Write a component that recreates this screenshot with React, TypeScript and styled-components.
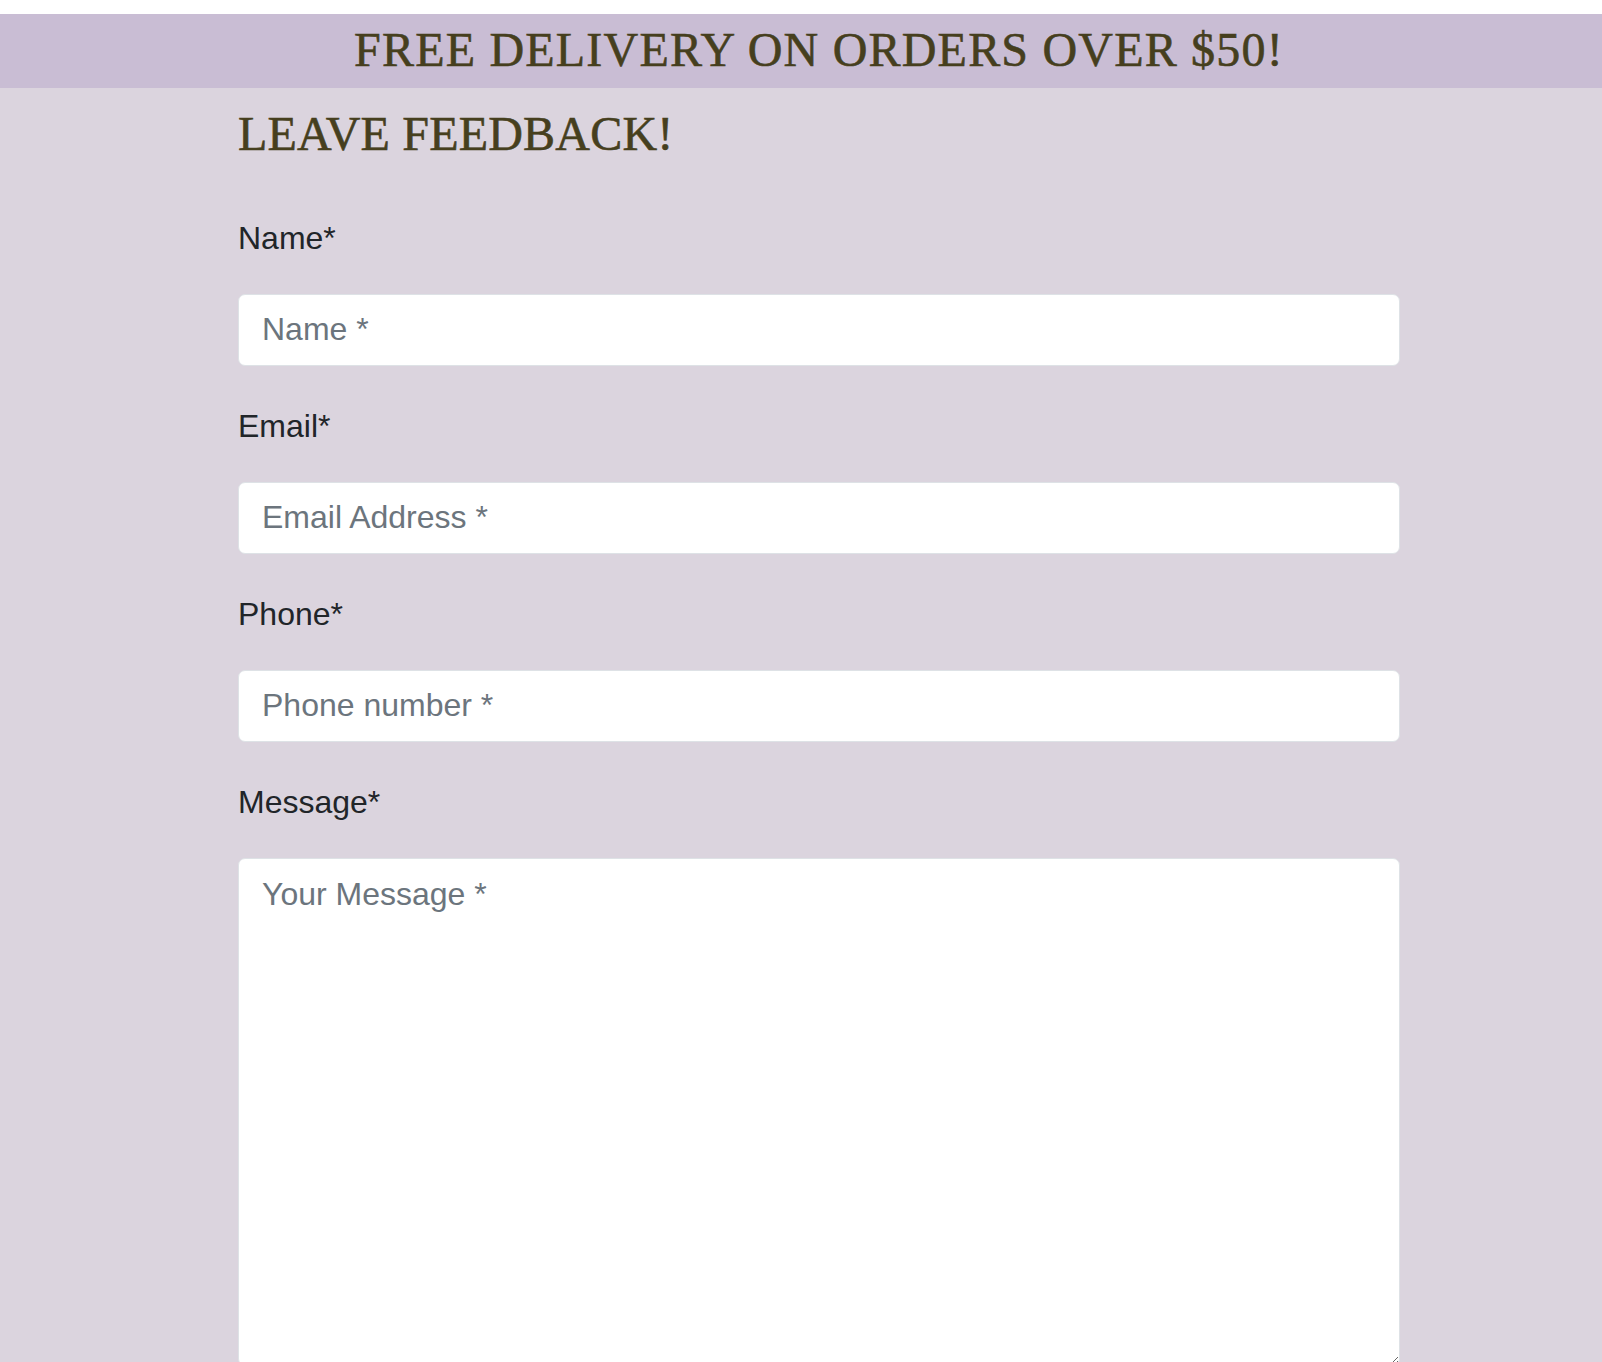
import styled, { createGlobalStyle } from 'styled-components';

const GlobalStyle = createGlobalStyle`
  html, body {
    margin: 0;
    padding: 0;
    background: #ffffff;
  }
  * {
    box-sizing: border-box;
  }
`;

const Page = styled.div`
  padding-top: 14px;
  background: #ffffff;
`;

const PromoBar = styled.div`
  background: #c9bdd4;
  height: 74px;
  padding: 0 0 2px 36px;
  text-align: center;
  font-family: 'Liberation Serif', 'Times New Roman', serif;
  font-size: 48px;
  line-height: 72px;
  letter-spacing: 1.2px;
  color: #463f1e;
  -webkit-text-stroke: 0.6px #463f1e;
  white-space: nowrap;
`;

const Main = styled.main`
  background: #dbd4de;
  padding: 17px 202px 0 238px;
`;

const Heading = styled.h1`
  margin: 0 0 51px;
  font-family: 'Liberation Serif', 'Times New Roman', serif;
  font-weight: 400;
  font-size: 48px;
  line-height: 57.6px;
  letter-spacing: 0.2px;
  color: #463f1e;
  -webkit-text-stroke: 0.6px #463f1e;
`;

const Form = styled.form`
  display: flex;
  flex-direction: column;
  gap: 36px;
`;

const Field = styled.div`
  display: flex;
  flex-direction: column;
`;

const Label = styled.label`
  margin-bottom: 32px;
  font-family: 'Liberation Sans', Arial, sans-serif;
  font-size: 32px;
  line-height: 48px;
  color: #212529;
`;

const inputBase = `
  width: 100%;
  border: 1px solid #dee2e6;
  border-radius: 7px;
  background: #ffffff;
  padding: 11px 23px;
  font-family: 'Liberation Sans', Arial, sans-serif;
  font-size: 32px;
  line-height: 48px;
  color: #212529;
  outline: none;

  &::placeholder {
    color: #6c757d;
    opacity: 1;
  }
`;

const TextInput = styled.input`
  ${inputBase}
  height: 72px;
`;

const MessageInput = styled.textarea<{ $rows: number }>`
  ${inputBase}
  display: block;
  height: ${({ $rows }) => $rows}px;
  resize: vertical;
`;

const fields = [
  { id: 'name', label: 'Name*', placeholder: 'Name *', type: 'text' },
  { id: 'email', label: 'Email*', placeholder: 'Email Address *', type: 'email' },
  { id: 'phone', label: 'Phone*', placeholder: 'Phone number *', type: 'tel' },
];

export default function App() {
  return (
    <>
      <GlobalStyle />
      <Page>
        <PromoBar>FREE DELIVERY ON ORDERS OVER $50!</PromoBar>
        <Main>
          <Heading>LEAVE FEEDBACK!</Heading>
          <Form onSubmit={(e) => e.preventDefault()}>
            {fields.map((f) => (
              <Field key={f.id}>
                <Label htmlFor={f.id}>{f.label}</Label>
                <TextInput id={f.id} type={f.type} placeholder={f.placeholder} />
              </Field>
            ))}
            <Field>
              <Label htmlFor="message">Message*</Label>
              <MessageInput id="message" placeholder="Your Message *" $rows={508} />
            </Field>
          </Form>
        </Main>
      </Page>
    </>
  );
}
